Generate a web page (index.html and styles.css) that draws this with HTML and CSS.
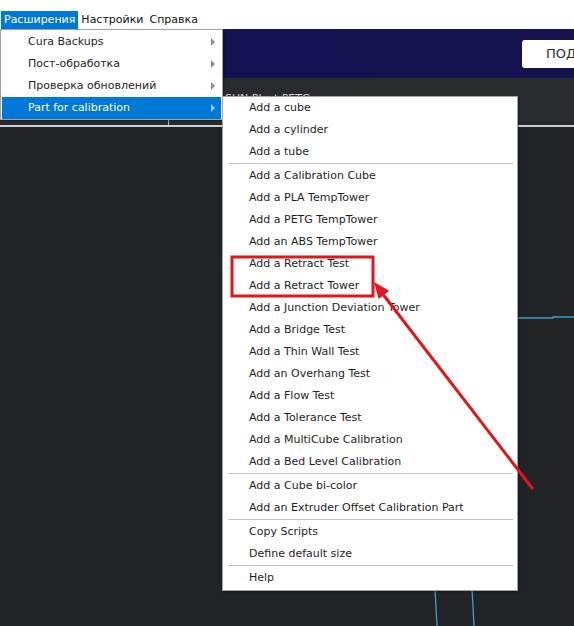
FILE: index.html
```html
<!DOCTYPE html>
<html lang="ru">
<head>
<meta charset="utf-8">
<title>Cura — Расширения</title>
<link rel="stylesheet" href="styles.css">
</head>
<body>
<div class="app">
  <div class="menubar">
    <span class="mb-item active">Расширения</span>
    <span class="mb-item">Настройки</span>
    <span class="mb-item">Справка</span>
  </div>
  <div class="header">
    <div class="prepare-btn">ПОДГОТОВИТЬ</div>
  </div>
  <div class="tabbar">
    <div class="tab-first"></div>
    <div class="tab-label">SUN Plast PETG</div>
  </div>
  <div class="viewport">
    <svg class="scene" width="574" height="499" viewBox="0 0 574 499">
      <polyline points="517,191 553,191 553,190 574,190" fill="none" stroke="#3f9ccc" stroke-width="1.3"/>
      <polyline points="435,462 436,480 437,499" fill="none" stroke="#3f9ccc" stroke-width="1.3"/>
      <polyline points="472,462 473,480 474,499" fill="none" stroke="#3f9ccc" stroke-width="1.3"/>
    </svg>
  </div>

  <div class="menu main-menu">
    <div class="mi"><span>Cura Backups</span><i class="caret"></i></div>
    <div class="mi"><span>Пост-обработка</span><i class="caret"></i></div>
    <div class="mi"><span>Проверка обновлений</span><i class="caret"></i></div>
    <div class="mi selected"><span>Part for calibration</span><i class="caret"></i></div>
  </div>

  <div class="menu sub-menu">
    <div class="mi">Add a cube</div>
    <div class="mi">Add a cylinder</div>
    <div class="mi">Add a tube</div>
    <div class="sep"></div>
    <div class="mi">Add a Calibration Cube</div>
    <div class="mi">Add a PLA TempTower</div>
    <div class="mi">Add a PETG TempTower</div>
    <div class="mi">Add an ABS TempTower</div>
    <div class="mi">Add a Retract Test</div>
    <div class="mi">Add a Retract Tower</div>
    <div class="mi">Add a Junction Deviation Tower</div>
    <div class="mi">Add a Bridge Test</div>
    <div class="mi">Add a Thin Wall Test</div>
    <div class="mi">Add an Overhang Test</div>
    <div class="mi">Add a Flow Test</div>
    <div class="mi">Add a Tolerance Test</div>
    <div class="mi">Add a MultiCube Calibration</div>
    <div class="mi">Add a Bed Level Calibration</div>
    <div class="sep"></div>
    <div class="mi">Add a Cube bi-color</div>
    <div class="mi">Add an Extruder Offset Calibration Part</div>
    <div class="sep"></div>
    <div class="mi">Copy Scripts</div>
    <div class="mi">Define default size</div>
    <div class="sep"></div>
    <div class="mi">Help</div>
  </div>

  <svg class="annotation" width="574" height="626" viewBox="0 0 574 626">
    <rect x="232" y="257" width="141" height="39" fill="none" stroke="#e3141b" stroke-width="3"/>
    <line x1="532" y1="488" x2="382" y2="293" stroke="#e3141b" stroke-width="3" stroke-linecap="round"/>
    <polygon points="374,282 378.6,299 389.2,290.8" fill="#e3141b"/>
  </svg>
</div>
</body>
</html>
```

FILE: styles.css
```css
html, body {
  margin: 0;
  padding: 0;
}
body {
  width: 574px;
  height: 626px;
  overflow: hidden;
  background: #202426;
  font-family: "DejaVu Sans", "Liberation Sans", sans-serif;
  font-size: 11px;
}
.app {
  position: relative;
  width: 574px;
  height: 626px;
  display: flex;
  flex-direction: column;
  overflow: hidden;
}
.menubar {
  height: 18px;
  padding-top: 11px;
  padding-left: 1px;
  background: #ffffff;
  display: flex;
  align-items: stretch;
}
.mb-item {
  padding: 0 3px;
  display: flex;
  align-items: center;
  color: #111;
  line-height: 18px;
}
.mb-item.active {
  background: #0078d7;
  color: #ffffff;
}
.header {
  height: 49px;
  background: linear-gradient(to right, #121050, #15134f);
  display: flex;
  justify-content: flex-start;
  align-items: flex-start;
  padding-left: 522px;
  box-sizing: border-box;
  overflow: hidden;
}
.prepare-btn {
  margin-top: 11px;
  height: 28px;
  line-height: 28px;
  background: #ffffff;
  border-radius: 3px 0 0 3px;
  padding: 0 0 0 24px;
  width: 28px;
  overflow: hidden;
  color: #2b2b2b;
  font-size: 13px;
  white-space: nowrap;
  flex-shrink: 0;
}
.tabbar {
  height: 47px;
  background: #282b2e;
  border-bottom: 2px solid #cdcfd0;
  display: flex;
}
.tab-first {
  width: 168px;
  flex-shrink: 0;
  align-self: flex-end;
  height: 8px;
  border-right: 1px solid #b8b8b8;
}
.tab-label {
  padding-left: 56px;
  padding-top: 14px;
  color: #d6d6d6;
  font-size: 11px;
}
.viewport {
  flex: 1;
  position: relative;
  background: #202426;
}
.scene {
  position: absolute;
  left: 0;
  top: 0;
}
.menu {
  position: absolute;
  background: #ffffff;
  border: 1px solid #a3a3a3;
  box-shadow: 1px 1px 2px rgba(0, 0, 0, 0.35);
  color: #1e1e1e;
  box-sizing: border-box;
}
.main-menu {
  left: 0;
  top: 29px;
  width: 223px;
  padding: 1px 1px 0 1px;
}
.sub-menu {
  left: 222px;
  top: 96px;
  width: 296px;
  padding: 0 0 1px 0;
}
.mi {
  height: 22px;
  line-height: 22px;
  white-space: nowrap;
}
.main-menu .mi {
  padding-left: 26px;
  padding-right: 6px;
  display: flex;
  justify-content: space-between;
  align-items: center;
}
.sub-menu .mi {
  padding-left: 26px;
}
.main-menu .mi.selected {
  background: #0078d7;
  color: #ffffff;
}
.caret {
  width: 0;
  height: 0;
  border-top: 4px solid transparent;
  border-bottom: 4px solid transparent;
  border-left: 4px solid #8c8c8c;
}
.selected .caret {
  border-left-color: #9fcdf2;
}
.sep {
  height: 1px;
  margin: 0 4px 1px 5px;
  background: #c4c4c4;
}
.annotation {
  position: absolute;
  left: 0;
  top: 0;
  pointer-events: none;
}
```
